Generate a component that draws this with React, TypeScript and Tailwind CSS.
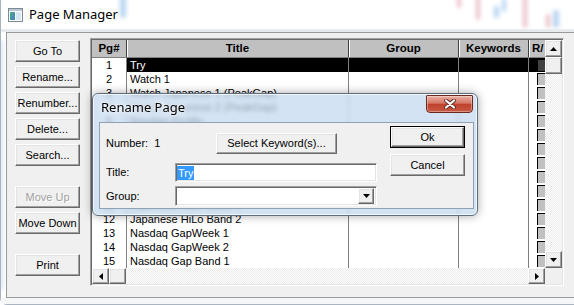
import React from "react";

const raised =
  "bg-[#f0f0f0] border border-t-white border-l-white border-r-[#696969] border-b-[#696969] shadow-[inset_-1px_-1px_0_#a0a0a0,inset_1px_1px_0_#e3e3e3]";
const sunken =
  "border border-t-[#a0a0a0] border-l-[#a0a0a0] border-r-white border-b-white shadow-[inset_1px_1px_0_#696969,inset_-1px_-1px_0_#e3e3e3]";
const track =
  "bg-[repeating-conic-gradient(#ffffff_0%_25%,#ebebeb_0%_50%)] bg-size-[2px_2px]";

const rows: [number, string][] = [
  [1, "Try"],
  [2, "Watch 1"],
  [3, "Watch Japanese 1 (PeakGap)"],
  [4, "Watch Japanese 2 (PeakGap)"],
  [5, "Nasdaq Prolific"],
  [6, "Japanese Prolific"],
  [7, "Watch 2"],
  [8, "Watch 3"],
  [9, "Japanese HiLo Week 1"],
  [10, "Japanese HiLo Week 2"],
  [11, "Japanese HiLo Band 1"],
  [12, "Japanese HiLo Band 2"],
  [13, "Nasdaq GapWeek 1"],
  [14, "Nasdaq GapWeek 2"],
  [15, "Nasdaq Gap Band 1"],
];

function Arrow({ dir }: { dir: "up" | "down" | "left" | "right" }) {
  const pts: Record<string, string> = {
    up: "0,4 7,4 3.5,0",
    down: "0,0 7,0 3.5,4",
    left: "4,0 4,7 0,3.5",
    right: "0,0 0,7 4,3.5",
  };
  const vertical = dir === "up" || dir === "down";
  return (
    <svg width={vertical ? 7 : 4} height={vertical ? 4 : 7} viewBox={vertical ? "0 0 7 4" : "0 0 4 7"}>
      <polygon points={pts[dir]} fill="#000" />
    </svg>
  );
}

function SideButton({ label, disabled, className = "" }: { label: string; disabled?: boolean; className?: string }) {
  return (
    <div
      className={`${raised} ${className} w-[65px] h-[22px] flex items-center justify-center ${
        disabled ? "text-[#a0a0a0] [text-shadow:1px_1px_0_#ffffff]" : "text-black"
      }`}
    >
      {label}
    </div>
  );
}

export default function App() {
  return (
    <div className="relative w-[574px] h-[305px] overflow-hidden bg-white font-['Liberation_Sans',Arial,sans-serif] text-[11px] text-black">
      {/* blurred glass background */}
      <svg className="absolute left-0 top-0 pointer-events-none" width="574" height="305">
        <defs>
          <filter id="bl" x="-50%" y="-50%" width="200%" height="200%">
            <feGaussianBlur stdDeviation="2.2" />
          </filter>
        </defs>
        <g filter="url(#bl)" opacity="0.55">
          <rect x="120" y="-4" width="6" height="22" rx="3" fill="#7fb2e6" />
          <rect x="457" y="-4" width="4" height="12" rx="2" fill="#d98c9a" />
          <rect x="476" y="-4" width="4" height="24" rx="2" fill="#d98c9a" />
          <rect x="494" y="6" width="5" height="12" rx="2" fill="#7fb2e6" />
          <rect x="502" y="-2" width="4" height="14" rx="2" fill="#7fb2e6" />
          <rect x="523" y="-4" width="4" height="32" rx="2" fill="#d98c9a" />
          <rect x="546" y="14" width="4" height="14" rx="2" fill="#d98c9a" />
          <rect x="553" y="10" width="6" height="18" rx="3" fill="#7fb2e6" />
          <rect x="-2" y="40" width="5" height="250" rx="2" fill="#b9d3ee" />
        </g>
      </svg>

      <div className="relative flex flex-col h-full border-b border-l border-[#a9b4c0] rounded-bl-[7px]">
        {/* title bar */}
        <div className="h-[29px] flex items-start pl-[7px] pt-[5px]">
          <svg width="15" height="14" viewBox="0 0 15 14" className="mt-[3px]">
            <rect x="0.5" y="0.5" width="14" height="13" fill="#ffffff" stroke="#7d8a96" />
            <rect x="1" y="1" width="13" height="2" fill="#b9c7d4" />
            <defs>
              <linearGradient id="ig" x1="0" y1="0" x2="1" y2="1">
                <stop offset="0" stopColor="#4fa889" />
                <stop offset="1" stopColor="#3a86c8" />
              </linearGradient>
            </defs>
            <rect x="2" y="4" width="5" height="8" fill="url(#ig)" />
            <rect x="8" y="4" width="5" height="8" fill="#d6e6f2" />
          </svg>
          <span className="ml-[6px] font-['Noto_Sans',sans-serif] text-[13px] leading-[18px] text-black">
            Page Manager
          </span>
        </div>
        <div className="h-[3px] bg-[#e8ebee]" />

        {/* client area */}
        <div className="ml-[5px] h-[266px] border-t border-l border-b border-[#9a9a9a] bg-[#f0f0f0] flex items-start pl-[8px] pt-[5px]">
          {/* buttons */}
          <div className="flex flex-col gap-[4px] mt-[2px] w-[65px]">
            <SideButton label="Go To" />
            <SideButton label="Rename..." />
            <SideButton label="Renumber..." />
            <SideButton label="Delete..." />
            <SideButton label="Search..." />
            <SideButton label="Move Up" disabled className="mt-[16px]" />
            <SideButton label="Move Down" />
            <SideButton label="Print" className="mt-[16px]" />
          </div>

          {/* grid */}
          <div className={`${sunken} ml-[10px] w-[474px] h-[248px] p-[1px] flex flex-col bg-[#f0f0f0]`}>
            <div className="flex h-[228px]">
              <div className="w-[453px] h-[228px] overflow-hidden flex flex-col bg-white">
                <div className="grid grid-cols-[35px_222px_110px_70px_30px] h-[18px] shrink-0 bg-[#c0c0c0] font-bold text-[11.5px] border-b border-[#808080]">
                  <div className="border-r border-[#404040] flex items-center justify-center">Pg#</div>
                  <div className="border-r border-[#404040] shadow-[inset_1px_0_0_#ffffff] flex items-center justify-center">
                    Title
                  </div>
                  <div className="border-r border-[#404040] shadow-[inset_1px_0_0_#ffffff] flex items-center justify-center">
                    Group
                  </div>
                  <div className="border-r border-[#404040] shadow-[inset_1px_0_0_#ffffff] flex items-center justify-center">
                    Keywords
                  </div>
                  <div className="shadow-[inset_1px_0_0_#ffffff] flex items-center pl-[3px]">R/</div>
                </div>
                {rows.map(([n, t], i) => {
                  const sel = i === 0;
                  return (
                    <div key={n} className="grid grid-cols-[35px_222px_110px_70px_30px] h-[14px] shrink-0">
                      <div className="border-r border-b border-[#808080] bg-white text-center leading-[15px]">{n}</div>
                      <div
                        className={`border-r border-b border-[#808080] pl-[3px] leading-[15px] whitespace-nowrap ${
                          sel ? "bg-black text-white" : "bg-white"
                        }`}
                      >
                        {t}
                      </div>
                      <div className={`border-r border-b border-[#808080] ${sel ? "bg-black" : "bg-white"}`} />
                      <div className={`border-r border-b border-[#808080] ${sel ? "bg-black" : "bg-white"}`} />
                      <div className={`border-b border-[#808080] ${sel ? "bg-black" : "bg-white"}`}>
                        <div
                          className={`ml-[8px] mt-[1px] w-[13px] h-[12px] border-t border-l border-black ${
                            sel ? "bg-[#404040]" : "bg-[#c0c0c0]"
                          }`}
                        />
                      </div>
                    </div>
                  );
                })}
              </div>
              {/* vertical scrollbar */}
              <div className="w-[17px] h-[228px] flex flex-col">
                <div className={`${raised} h-[17px] flex items-center justify-center`}>
                  <Arrow dir="up" />
                </div>
                <div className={`${raised} h-[17px]`} />
                <div className={`${track} flex-1`} />
                <div className={`${raised} h-[17px] flex items-center justify-center`}>
                  <Arrow dir="down" />
                </div>
              </div>
            </div>
            {/* horizontal scrollbar */}
            <div className="flex h-[16px]">
              <div className="w-[453px] flex">
                <div className={`${raised} w-[17px] flex items-center justify-center`}>
                  <Arrow dir="left" />
                </div>
                <div className={`${raised} w-[17px]`} />
                <div className={`${track} flex-1`} />
                <div className={`${raised} w-[17px] flex items-center justify-center`}>
                  <Arrow dir="right" />
                </div>
              </div>
              <div className="w-[17px] bg-[#f0f0f0]" />
            </div>
          </div>
        </div>
        <div className="flex-1 bg-[#f4f6f8]" />
      </div>

      {/* Rename Page dialog */}
      <div className="absolute left-[92px] top-[93px] w-[386px] h-[123px] rounded-[6px] border border-[#5d6e80] bg-[#c5daef]/75 backdrop-blur-[2px] shadow-[0_0_10px_rgba(0,0,0,0.35),inset_0_0_0_1px_rgba(255,255,255,0.7)] flex flex-col pl-[6px] pr-[3px]">
        <div className="h-[28px] flex items-start justify-between">
          <span className="pl-[2px] pt-[4px] font-['Noto_Sans',sans-serif] text-[13px] leading-[18px] text-black [text-shadow:0_0_6px_#ffffff,0_0_3px_#ffffff]">
            Rename Page
          </span>
          <div className="mt-[1px] mr-[1px] w-[47px] h-[18px] rounded-b-[4px] rounded-t-[1px] border border-[#6a2a22] bg-[linear-gradient(#eab0a4,#d67664_45%,#c0412d_52%,#c85a45)] shadow-[inset_0_0_0_1px_rgba(255,255,255,0.35)] flex items-center justify-center">
            <svg width="12" height="10" viewBox="0 0 12 10">
              <path d="M2 1.5 L10 8.5 M10 1.5 L2 8.5" stroke="#5a2a24" strokeWidth="4" strokeLinecap="round" />
              <path d="M2 1.5 L10 8.5 M10 1.5 L2 8.5" stroke="#ffffff" strokeWidth="2.2" strokeLinecap="round" />
            </svg>
          </div>
        </div>
        <div className="h-[87px] border border-[#8ea2b6] bg-[#f0f0f0] flex">
          <div className="w-[290px] pl-[6px] pt-[10px] flex flex-col">
            <div className="flex items-center h-[21px]">
              <span className="w-[110px]">Number:&nbsp; 1</span>
              <div className={`${raised} w-[121px] h-[21px] flex items-center justify-center`}>Select Keyword(s)...</div>
            </div>
            <div className="flex items-center h-[19px] mt-[9px]">
              <span className="w-[69px]">Title:</span>
              <div className={`${sunken} bg-white w-[202px] h-[19px] flex items-center pl-[1px]`}>
                <span className="bg-[#3399ff] text-white leading-[14px] px-[1px]">Try</span>
              </div>
            </div>
            <div className="flex items-center h-[20px] mt-[4px]">
              <span className="w-[69px]">Group:</span>
              <div className={`${sunken} bg-white w-[202px] h-[20px] flex items-center justify-end p-[2px]`}>
                <div className={`${raised} w-[16px] h-[16px] flex items-center justify-center`}>
                  <Arrow dir="down" />
                </div>
              </div>
            </div>
          </div>
          <div className="pt-[3px] flex flex-col gap-[6px]">
            <div className="w-[75px] h-[22px] border border-black">
              <div className={`${raised} w-full h-full flex items-center justify-center`}>Ok</div>
            </div>
            <div className={`${raised} w-[75px] h-[22px] flex items-center justify-center`}>Cancel</div>
          </div>
        </div>
      </div>
    </div>
  );
}
